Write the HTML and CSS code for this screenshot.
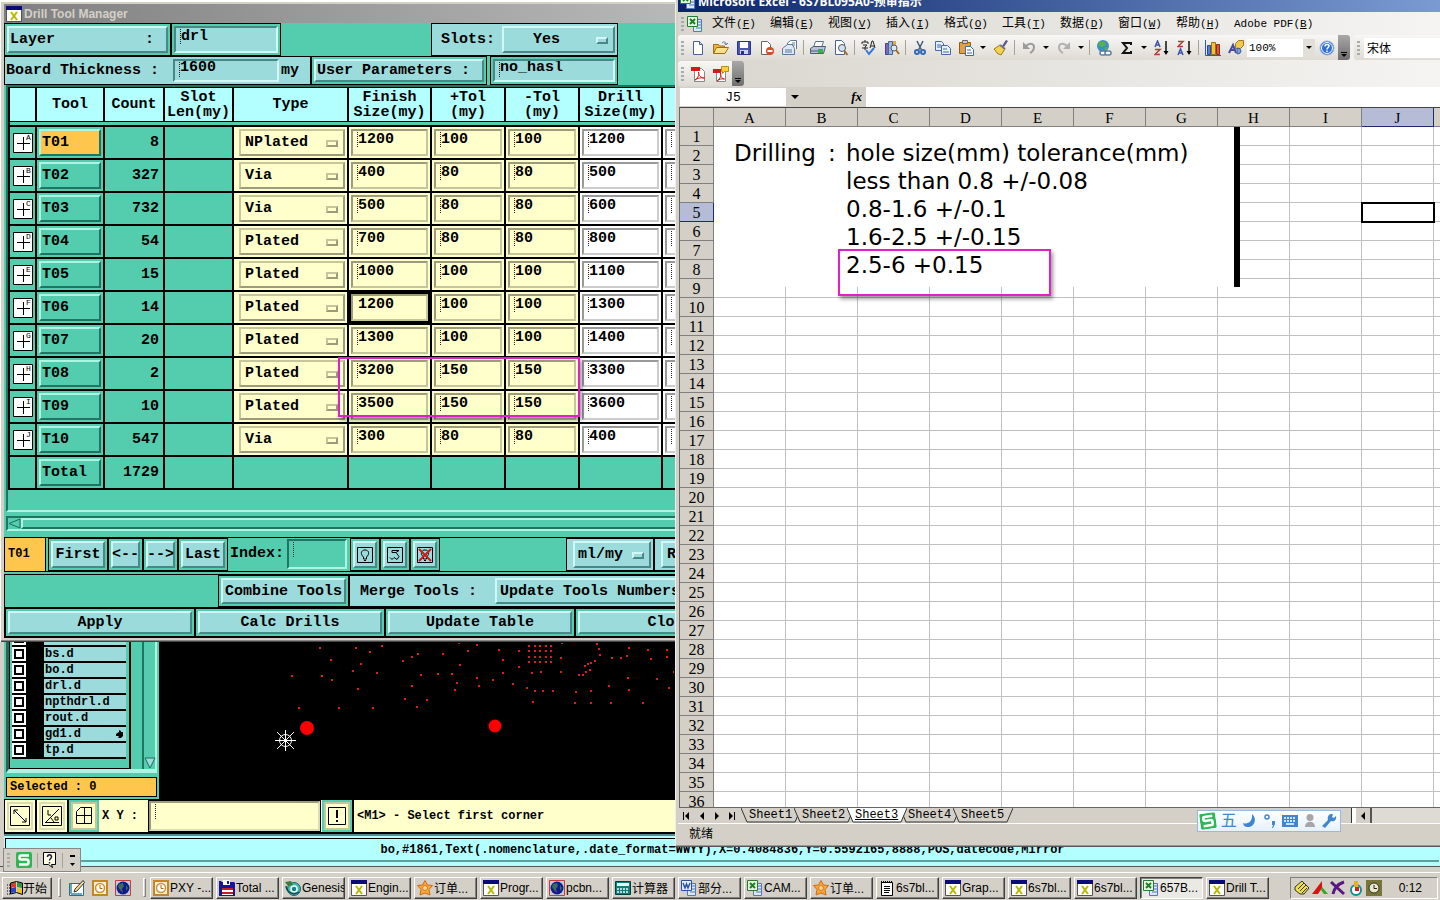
FILE: index.html
```html
<!DOCTYPE html>
<html lang="zh-CN">
<head>
  <meta charset="UTF-8" />
  <title>Drill Tool Manager</title>
  <meta name="viewport" content="width=device-width, initial-scale=1.0" />
  <link rel="stylesheet" href="styles.css">
</head>
<body>
  <svg class="defs" aria-hidden="true">
    <symbol id="i-x" viewBox="0 0 16 16"><path fill="#fff" stroke="#555" d="M.5.5h15v15H.5z"/><path fill="#0a0a78" d="M0 0h16v4H0z"/><path stroke="#b8b800" stroke-width="2" d="M5 6l6 8M11 6l-6 8"/></symbol>
    <symbol id="i-xls" viewBox="0 0 16 16"><path fill="#dce8fa" stroke="#5577bb" d="M6.500 3.500h8v12h-8z"/><path stroke="#5577bb" d="M9 6h5M9 9h5M9 12h5"/><path fill="#e7f5e1" stroke="#287b2e" d="M.5.5h10v10H.5z"/><path stroke="#198024" stroke-width="2" d="M3 3l5 5M8 3L3 8"/></symbol>
    <symbol id="i-doc" viewBox="0 0 16 16"><path fill="#dce8fa" stroke="#5577bb" d="M6.500 3.500h8v12h-8z"/><path stroke="#5577bb" d="M9 6h5M9 9h5M9 12h5"/><path fill="#e8f0ff" stroke="#2852a8" d="M.5.5h10v10H.5z"/><path fill="none" stroke="#2852a8" stroke-width="1.500" d="M2 3l2 5 1.500-4L7 8l2-5"/></symbol>
    <symbol id="i-new" viewBox="0 0 16 16"><path fill="#fff" stroke="#47648f" d="M3.500 1.500h6l3 3v10h-9z"/><path fill="#b9cbe6" stroke="#47648f" d="M9.500 1.500v3h3"/></symbol>
    <symbol id="i-open" viewBox="0 0 16 16"><path fill="#f0b440" stroke="#9c6f16" d="M.5 13.500v-9h5l1 1.500h5v2"/><path fill="#ffe08a" stroke="#9c6f16" d="M.5 13.500l3-6h12l-3.500 6z"/><path fill="none" stroke="#5c789f" d="M9 3c2-2 4-1 4 1m-1.500-1L13 5l2-2"/></symbol>
    <symbol id="i-save" viewBox="0 0 16 16"><path fill="#4b57b8" stroke="#28337e" d="M1.500 1.500h13v13h-13z"/><path fill="#fff" d="M4 2h8v6H4z"/><path fill="#cdd3ee" d="M4 10h8v4H4z"/><path fill="#28337e" d="M5 11h3v3H5z"/></symbol>
    <symbol id="i-perm" viewBox="0 0 16 16"><path fill="#fff" stroke="#666" d="M2.500 1.500h6l3 3v10h-9z"/><circle cx="11" cy="11" r="4" fill="#d84a28"/><path stroke="#fff" stroke-width="2" d="M8.500 11h5"/></symbol>
    <symbol id="i-mail" viewBox="0 0 16 16"><path fill="#fff" stroke="#5c789f" d="M5.500 6V3l3-2.500h6V9"/><path fill="#dfe8f6" stroke="#5c789f" d="M.5 8.500l5-4h5l2 4v6H.5z"/><path stroke="#5c789f" d="M3 10h7M3 12h7M10 3h3M10 5h3"/></symbol>
    <symbol id="i-print" viewBox="0 0 16 16"><path fill="#fff" stroke="#5c6f89" d="M5.500 1.500h8l-2 6h-8z"/><path fill="#b7c4d6" stroke="#4a5b73" d="M.5 8.500l3-2h12l-2 7H.5z"/><path stroke="#4a5b73" d="M1 11h12"/><path fill="#3cae4a" d="M8 9h5v4H8z"/></symbol>
    <symbol id="i-preview" viewBox="0 0 16 16"><path fill="#fff" stroke="#47648f" d="M2.500.5h6l3 3v11h-9z"/><circle cx="9" cy="8" r="3.500" fill="#cfe3f7" stroke="#555"/><path stroke="#a86b2c" stroke-width="2" d="M11.500 11l3 4"/></symbol>
    <symbol id="i-spell" viewBox="0 0 16 16"><path fill="none" stroke="#222" d="M4 0v2M1 4V2h6v2M2 5h4L4 7v3M1 8h6M9 8l2-7h1l2 7M10 6h4"/><path fill="none" stroke="#3878d8" stroke-width="2" d="M5 10l3 4 5-6"/></symbol>
    <symbol id="i-research" viewBox="0 0 16 16"><path fill="#7a68b8" stroke="#4d3f84" d="M1.500 3.500h3v11h-3z"/><path fill="#9fb7e0" stroke="#48659b" d="M4.500 1.500h4v13h-4z"/><path fill="#e6a93c" d="M9 1h3v10H9z"/><circle cx="10" cy="8" r="3" fill="#d7eafa" stroke="#555"/><path stroke="#a86b2c" stroke-width="2" d="M12 10l3 4"/></symbol>
    <symbol id="i-cut" viewBox="0 0 16 16"><path stroke="#44597c" stroke-width="1.500" d="M5 1l4.500 9M11 1L6.500 10"/><g fill="none" stroke="#3668b8" stroke-width="2"><circle cx="5" cy="12" r="2"/><circle cx="11" cy="12" r="2"/></g></symbol>
    <symbol id="i-copy" viewBox="0 0 16 16"><g fill="#e8f0fc" stroke="#4468a8"><path d="M.5 1.500h6l2 2v7h-8z"/><path d="M6.500 5.500h6l3 3v6h-9z"/></g><path stroke="#4468a8" d="M2 5h4M2 7h4M8 9h4M8 12h6"/></symbol>
    <symbol id="i-paste" viewBox="0 0 16 16"><path fill="#e2a13a" stroke="#8d5f18" d="M1.500 2.500h11v11h-11z"/><path fill="#ccc" stroke="#666" d="M4.500.5h5v3h-5z"/><path fill="#fff" stroke="#4468a8" d="M7.500 6.500h5l3 3v6h-8z"/><path stroke="#4468a8" d="M9 10h4M9 13h5"/></symbol>
    <symbol id="i-brush" viewBox="0 0 16 16"><path fill="#5a5486" d="M15 1l-4 6-2-1 4-6z"/><path fill="#f3d24f" stroke="#a07b1d" d="M1 9l6-4 5 4-4 6-2-1-1 0z"/><path stroke="#777" stroke-width="2" d="M7 5l5 4"/></symbol>
    <symbol id="i-undo" viewBox="0 0 16 16"><path fill="none" stroke="#9a9a98" stroke-width="2" d="M5 6c4-4 8-2 8 1 0 3-2 5-4 6"/><path fill="#9a9a98" d="M2 2v7h7z"/></symbol>
    <symbol id="i-redo" viewBox="0 0 16 16"><path fill="none" stroke="#b0b0ae" stroke-width="2" d="M11 6C7 2 3 4 3 7c0 3 2 5 4 6"/><path fill="#b0b0ae" d="M14 2v7H7z"/></symbol>
    <symbol id="i-link" viewBox="0 0 16 16"><circle cx="7" cy="6" r="6" fill="#3c8fc4"/><path fill="#58b048" d="M3 2l5-1 2 4-4 2-3-1zM8 8l4-1-2 4z"/><g fill="#fff" stroke="#5c7cae" stroke-width="1.500"><rect x="4" y="11" width="6" height="4" rx="2"/><rect x="9" y="11" width="6" height="4" rx="2"/></g></symbol>
    <symbol id="i-sum" viewBox="0 0 16 16"><path fill="none" stroke="#111" stroke-width="2" d="M12 5V3H4l4 5-4 5h8v-2"/></symbol>
    <symbol id="i-az" viewBox="0 0 16 16"><path fill="none" stroke="#3e56a8" stroke-width="1.500" d="M1 7l2.500-6L6 7M2 5h3"/><path fill="none" stroke="#a8443e" stroke-width="1.500" d="M1 9.500h5l-5 5h5"/><path stroke="#111" stroke-width="1.500" d="M12 1v12"/><path d="M9.500 11h5L12 15z"/></symbol>
    <symbol id="i-za" viewBox="0 0 16 16"><path fill="none" stroke="#a8443e" stroke-width="1.500" d="M1 1.500h5l-5 5h5"/><path fill="none" stroke="#3e56a8" stroke-width="1.500" d="M1 15l2.500-6L6 15M2 13h3"/><path stroke="#111" stroke-width="1.500" d="M12 1v12"/><path d="M9.500 11h5L12 15z"/></symbol>
    <symbol id="i-chart" viewBox="0 0 16 16"><path fill="none" stroke="#35589a" d="M.5 0v15.500H16"/><path fill="#4e80d8" stroke="#234a92" d="M2.500 5.500h3v9h-3z"/><path fill="#f5bf36" stroke="#9c6f16" d="M6.500 2.500h4v12h-4z"/><path fill="#dc5630" stroke="#8e2c12" d="M11.500 4.500h3v10h-3z"/></symbol>
    <symbol id="i-draw" viewBox="0 0 16 16"><path fill="#f0c850" stroke="#9c7a1e" d="M7.500 3.500l3-3h5v5l-3 3h-5z"/><path fill="#7ba0dc" stroke="#3e5c98" d="M9 14a4 3 0 1 0 0-6z"/><path fill="none" stroke="#4848a0" stroke-width="2" d="M1 13l4-8 3 8M3 10h4"/></symbol>
    <symbol id="i-help" viewBox="0 0 16 16"><circle cx="8" cy="8" r="7" fill="#2f6fd4" stroke="#8fb0e4"/><circle cx="8" cy="8" r="5.500" fill="none" stroke="#fff"/><path fill="none" stroke="#fff" stroke-width="1.500" d="M6 6.500c0-3 4-2.500 4-.5C10 7.500 8 7.500 8 9.500M8 10.500V12"/></symbol>
    <symbol id="i-pdf" viewBox="0 0 16 16"><path fill="#fff" stroke="#888" d="M4.500 2.500h7l3 3v10h-10z"/><path fill="#d81818" d="M1 1h9v4H1z"/><path fill="none" stroke="#d81818" d="M5 14c4-2 4-7 3.500-8 0 4 3 6 6 6-4-.5-7 0-9.500 2"/></symbol>
    <symbol id="i-pdf2" viewBox="0 0 16 16"><path fill="#fff" stroke="#888" d="M3.500 4.500h9v11h-9z"/><path fill="#d81818" d="M0 3h8v4H0z"/><path fill="none" stroke="#d81818" d="M4 15c4-2 4-7 3.500-8 0 4 2 6 4 6-3-.5-5 0-7.500 2"/><path fill="#ffd23c" stroke="#b98d12" d="M8.500.5h7v5h-4l-2 2v-2h-1z"/></symbol>
    <symbol id="i-clock" viewBox="0 0 16 16"><path fill="#fff1d6" stroke="#c98524" stroke-width="2" d="M1 1h14v14H1z"/><circle cx="8" cy="8" r="4.500" fill="#fff" stroke="#d09038" stroke-width="1.500"/><path fill="none" stroke="#a8641a" d="M8 5v3.500h2.500"/></symbol>
    <symbol id="i-globe" viewBox="0 0 16 16"><path fill="#c8c8d8" stroke="#c83c3c" d="M.5.500h15v15H.5z"/><circle cx="8" cy="8" r="6.500" fill="#0c1c8c"/><path fill="#3f6a58" d="M4 4l4-1 1 3-2 3 1 4-3-3-2-3zM11 5l2 3-2 3z"/></symbol>
    <symbol id="i-edit" viewBox="0 0 16 16"><path fill="#fff" stroke="#2a6f8c" d="M.5 3.500h14v12H.5z"/><path stroke="#6aa8c0" stroke-width="2" d="M2 14h11M2 4v10"/><path fill="#f0dc8c" stroke="#333" d="M14 .5l1.500 2L8 11l-3 1 1-3z"/></symbol>
    <symbol id="i-floppy" viewBox="0 0 16 16"><path fill="#16169a" d="M0 1h2l1 1h12l1 1v13H0z"/><path fill="#fff" d="M4 0h7v5H4zM3 8h11v7H3z"/><path fill="#16169a" d="M8 1h2v3H8z"/><path stroke="#c02020" stroke-width="2" d="M3 9h11M3 13h11"/></symbol>
    <symbol id="i-gen" viewBox="0 0 16 16"><circle cx="9" cy="9" r="6.500" fill="#48b8b0" stroke="#14646c"/><circle cx="9" cy="9" r="3" fill="#1c8088" stroke="#e0fff8" stroke-width="1.500"/><path fill="#3a7c34" d="M0 2l6-1 2 4-5 1z"/><path fill="none" stroke="#144848" stroke-width="1.500" d="M1 6c1 8 9 9 13 6"/></symbol>
    <symbol id="i-star" viewBox="0 0 16 16"><path fill="#f7a83c" stroke="#d06a10" d="M8 .5l2.500 4.500 5 .5-3.500 4 1 5.500-5-2-5 2 1-5.500-3.500-4 5-.5z"/><circle cx="8" cy="8" r="2.500" fill="#ffd890" stroke="#e07820"/></symbol>
    <symbol id="i-calc" viewBox="0 0 16 16"><path fill="#167c78" stroke="#063c3c" d="M.5 1.500h15v13H.5z"/><path fill="#dff" d="M2 3h12v3H2z"/><path stroke="#dff" stroke-width="1.500" stroke-dasharray="2 1" d="M2 9h12M2 12h12"/></symbol>
    <symbol id="i-note" viewBox="0 0 16 16"><path fill="#fff" stroke="#000" d="M2.500 2.500h11v13h-11z"/><path stroke="#000" stroke-width="2" stroke-dasharray="1 1" d="M2 2h12"/><path stroke="#000" d="M5 6.500h6M5 8.500h6M5 10.500h6M5 12.500h5"/></symbol>
    <symbol id="i-sogou" viewBox="0 0 16 16"><rect width="16" height="16" rx="2" fill="#2fb551"/><path fill="none" stroke="#fff" stroke-width="2.500" d="M13 3.500H5c-2 0-2 4 0 4h6c2 0 2 5 0 5H3"/></symbol>
    <symbol id="i-mark" viewBox="0 0 20 20"><path fill="#fff" stroke="#000" d="M.5.5h19v19H.5z"/><path stroke="#000" d="M4 10.500h13M10.500 4v13"/></symbol>
  </svg>

  <div class="desktop">
    <!-- editor behind -->
    <section class="editor">
      <div class="editor-main">
        <aside class="side">
          <div class="side-list">
            <div class="layers" id="layers"></div>
            <div class="side-scroll"><svg width="12" height="12" viewBox="0 0 12 12"><path fill="#9bdbdb" stroke="#1f6c5c" d="M1 1h10L6 11z"/></svg></div>
          </div>
          <div class="selected">Selected : 0</div>
        </aside>
        <svg class="board" id="board" width="515" height="156" viewBox="0 0 515 156">
          <g fill="#f00"><circle cx="148" cy="85" r="7"/><circle cx="336" cy="83" r="6.500"/></g>
          <g fill="none" stroke="#fff"><circle cx="126.500" cy="97.500" r="6"/><path d="M116 97.500h21M126.500 87v21M118 89l17 17M135 89l-17 17"/></g>
        </svg>
      </div>
      <div class="prompt">
        <button class="pb" aria-label="Zoom"><svg width="20" height="20" viewBox="0 0 20 20"><path fill="none" stroke="#000" d="M.5.500h19v19H.5zM4 4l12 12M4 8V4h4M16 12v4h-4"/></svg></button>
        <button class="pb" aria-label="Angle"><svg width="20" height="20" viewBox="0 0 20 20"><path fill="none" stroke="#000" d="M.5.500h19v19H.5zM3 17L17 3M3 16.500h14M6 4v5h3M9 12l3 4M13 11h3v3h-3z"/></svg></button>
        <button class="pb teal" aria-label="Grid"><svg width="16" height="18" viewBox="0 0 16 18"><path fill="none" stroke="#000" d="M4.500.5h11v16H.5v-12zM8.500 0v17M0 8.500h16"/></svg></button>
        <label class="xy" for="xy">X Y :</label>
        <input class="xy-input ibeam" id="xy" type="text" />
        <button class="pb teal" aria-label="Alert"><svg width="18" height="18" viewBox="0 0 18 18"><path fill="none" stroke="#000" d="M.5.500h17v17H.5z"/><path stroke="#000" stroke-width="2" d="M9 3v8M9 13v2"/></svg></button>
        <div class="message">&lt;M1&gt; - Select first corner</div>
      </div>
      <div class="coords"><div>bo,#1861,Text(.nomenclature,.date_format=WWYY),X=0.4084836,Y=0.5592165,8888,POS,datecode,Mirror</div></div>
    </section>

    <!-- drill tool manager -->
    <section class="drill">
      <div class="drill-title"><svg class="ic"><use href="#i-x"/></svg>Drill Tool Manager</div>
      <div class="drill-body">
        <div class="line line-1">
          <div class="cell w-layer"><button class="btn layer-btn"><span>Layer</span><span>:</span></button></div>
          <div class="cell w-name"><input class="field blue ibeam" type="text" value="drl" aria-label="Layer" /></div>
          <div class="space"></div>
          <div class="cell flat w-slots"><label for="slots">Slots:</label><span class="pick"><select id="slots" class="btn"><option>Yes</option></select></span></div>
        </div>
        <div class="line line-2">
          <div class="cell flat w-board"><label for="thick">Board Thickness :</label><input class="field blue ibeam" id="thick" type="text" value="1600" /><span>my</span></div>
          <div class="cell w-user"><button class="btn">User Parameters :</button></div>
          <div class="cell w-hasl"><input class="field blue ibeam" type="text" value="no_hasl" aria-label="User Parameters" /></div>
        </div>

        <div class="table-panel">
          <table class="tools">
            <colgroup><col class="c1"><col class="c2"><col class="c3"><col class="c4"><col class="c5"><col class="c6"><col class="c7"><col class="c7"><col class="c6"><col></colgroup>
            <thead>
              <tr><th></th><th>Tool</th><th>Count</th><th>Slot<br>Len(my)</th><th>Type</th><th>Finish<br>Size(my)</th><th>+Tol<br>(my)</th><th>-Tol<br>(my)</th><th>Drill<br>Size(my)</th><th></th></tr>
              <tr class="gap"><td colspan="10"></td></tr>
            </thead>
            <tbody id="tools"></tbody>
          </table>
        </div>
        <div class="hscroll"><svg width="13" height="11" viewBox="0 0 13 11"><path fill="#54cdae" stroke="#1f6c5c" d="M12 1v9L1 5.500z"/></svg><div class="thumb"></div></div>

        <div class="line line-3">
          <div class="current">T01</div>
          <div class="cell w-first"><button class="btn">First</button></div>
          <div class="cell w-arrow"><button class="btn">&lt;--</button></div>
          <div class="cell w-arrow"><button class="btn">--&gt;</button></div>
          <div class="cell w-last"><button class="btn">Last</button></div>
          <label class="index" for="index">Index:</label>
          <input class="field index-input ibeam" id="index" type="text" />
          <div class="cell w-icon"><button class="btn" aria-label="Highlight"><svg width="18" height="18" viewBox="0 0 18 18"><path fill="none" stroke="#000" d="M1.500 1.500h15v15h-15zM7.500 11C4 8 5 4 9 4s5 4 1.500 7v2h-3zM8 14.500h2"/></svg></button></div>
          <div class="cell w-icon"><button class="btn" aria-label="Clear"><svg width="18" height="18" viewBox="0 0 18 18"><path fill="none" stroke="#000" d="M1.500 1.500h15v15h-15zM6 4.500h7M6 4.500v2h4l3 4-2 3-3-2-2 2-2-2M10 6.500l3-2"/></svg></button></div>
          <div class="cell w-icon"><button class="btn" aria-label="Off"><svg width="18" height="18" viewBox="0 0 18 18"><path fill="none" stroke="#000" d="M1.500 1.500h15v15h-15zM7.500 11C4 8 5 4 9 4s5 4 1.500 7v2h-3zM8 14.500h2"/><path stroke="#d01818" stroke-width="2" d="M3 3l12 12M15 3L3 15"/></svg></button></div>
          <div class="space-2"></div>
          <div class="cell flat w-unit"><span class="pick"><select class="btn" aria-label="Units"><option>ml/my</option></select></span></div>
          <div class="cell flat w-rest"><button class="btn">R</button></div>
        </div>
        <div class="line line-4">
          <div class="space-3"></div>
          <div class="cell w-combine"><button class="btn">Combine Tools</button></div>
          <div class="cell flat w-merge"><span>Merge Tools :</span><button class="btn">Update Tools Numbers</button></div>
        </div>
        <div class="line line-5">
          <div class="cell"><button class="btn">Apply</button></div>
          <div class="cell"><button class="btn">Calc Drills</button></div>
          <div class="cell"><button class="btn">Update Table</button></div>
          <div class="cell"><button class="btn">Close</button></div>
        </div>
      </div>
      <div class="note note-tools"></div>
    </section>

    <!-- spreadsheet -->
    <section class="excel">
      <div class="excel-title"><svg class="ic"><use href="#i-xls"/></svg>Microsoft Excel - 6S7BL095A0-预审指示</div>
      <nav class="menu">
        <i class="grip"></i><svg class="ic"><use href="#i-xls"/></svg>
        <a href="#">文件<span>(<u>F</u>)</span></a><a href="#">编辑<span>(<u>E</u>)</span></a><a href="#">视图<span>(<u>V</u>)</span></a><a href="#">插入<span>(<u>I</u>)</span></a><a href="#">格式<span>(<u>O</u>)</span></a><a href="#">工具<span>(<u>T</u>)</span></a><a href="#">数据<span>(<u>D</u>)</span></a><a href="#">窗口<span>(<u>W</u>)</span></a><a href="#">帮助<span>(<u>H</u>)</span></a><a href="#"><span>Adobe PDF(<u>B</u>)</span></a>
      </nav>
      <div class="bars">
        <div class="toolbar" id="toolbar"></div>
        <div class="toolbar grow"><i class="grip"></i><input class="font-box" type="text" value="宋体" aria-label="字体" /></div>
      </div>
      <div class="bars">
        <div class="toolbar"><i class="grip"></i><button class="tb" aria-label="pdf"><svg class="ic"><use href="#i-pdf"/></svg></button><button class="tb" aria-label="pdf comment"><svg class="ic"><use href="#i-pdf2"/></svg></button><span class="more"></span></div>
      </div>
      <div class="formula">
        <input class="name-box" type="text" value="J5" aria-label="名称框" />
        <span class="arrow"></span><em>fx</em>
        <input class="formula-box" type="text" aria-label="编辑栏" />
      </div>
      <div class="grid">
        <table class="sheet">
          <thead><tr id="cols"></tr></thead>
          <tbody id="rows"></tbody>
        </table>
        <div class="spec">
          <div class="spec-name">Drilling</div>
          <div class="spec-colon">:</div>
          <div>hole size(mm) tolerance(mm)<br>less than 0.8 +/-0.08<br>0.8-1.6 +/-0.1<br>1.6-2.5 +/-0.15<br>2.5-6 +0.15</div>
        </div>
        <div class="note note-spec"></div>
      </div>
      <div class="tabs">
        <svg width="60" height="16" viewBox="0 0 60 16"><path stroke="#000" d="M4.500 4v8M55.500 4v8"/><path d="M10 4v8L6 8zM25 4v8l-4-4zM36 4v8l4-4zM50 4v8l4-4z"/></svg>
        <div class="tab-list" id="tabs"></div>
        <div class="tab-scroll"><button aria-label="scroll left"></button></div>
      </div>
      <div class="status">就绪</div>
    </section>

    <div class="ime">
      <svg class="ic tilt"><use href="#i-sogou"/></svg>
      <span>五</span>
      <svg width="16" height="16" viewBox="0 0 16 16"><path fill="#3f86d0" d="M10 1c6 5 2 14-5 13-2 0-4-2-4-4 5 2 10-2 9-9z"/></svg>
      <svg width="14" height="16" viewBox="0 0 14 16"><circle cx="4" cy="4" r="2" fill="none" stroke="#3f86d0" stroke-width="1.500"/><path fill="#3f86d0" d="M9 8h3v3l-2 4H9l1-3H9z"/></svg>
      <svg width="18" height="16" viewBox="0 0 18 16"><rect x="1" y="2" width="16" height="12" fill="#3f86d0"/><path stroke="#fff" stroke-width="1.500" stroke-dasharray="2 1" d="M3 5h12M3 8h12"/><path stroke="#fff" stroke-width="1.500" d="M5 11h8"/></svg>
      <svg width="12" height="16" viewBox="0 0 12 16"><circle cx="6" cy="4.500" r="3.500" fill="#a6a6a6"/><path fill="#a6a6a6" d="M1 14c0-7 10-7 10 0z"/></svg>
      <svg width="16" height="16" viewBox="0 0 16 16"><path fill="#3f86d0" d="M10 1h2l-1 3 2 1 2-2c1 4-2 6-5 5l-6 7-3-2 6-6c-1-3 1-6 3-6z"/></svg>
    </div>

    <div class="langbar">
      <i class="grip"></i>
      <svg class="ic"><use href="#i-sogou"/></svg>
      <i class="sep"></i>
      <svg width="14" height="16" viewBox="0 0 14 16"><path fill="#ffffe0" stroke="#000" d="M.5.500h12v12h-4l1 3-4-3h-5z"/><path fill="none" stroke="#1c1c50" stroke-width="1.500" d="M4.500 5c0-3 4-3 4 0 0 1.500-2 1.500-2 3.500M6.500 10v1.500"/></svg>
      <i class="sep"></i>
      <svg width="8" height="14" viewBox="0 0 8 14"><path d="M2 2h5v2H2zM2 10h5l-2.500 3z"/></svg>
    </div>

    <footer class="taskbar">
      <button class="start"><svg class="ic" viewBox="0 0 16 16"><path stroke="#000" stroke-dasharray="1 1" d="M0 5h5M0 8h5M0 11h5M0 14h4"/><path fill="#e23a22" d="M4 3l5-1v5H4z"/><path fill="#2a9c3a" d="M10 2l5 1v5l-5-1z"/><path fill="#2148c8" d="M4 8l5-1v5l-5 1z"/><path fill="#f0c020" d="M10 8l5 1v5l-5-1z"/><path fill="none" stroke="#000" d="M3.500 3v11l6-1.500 6 2V3l-6-1.500z"/></svg>开始</button>
      <i class="split"></i>
      <div class="quick"><svg class="ic"><use href="#i-edit"/></svg><svg class="ic"><use href="#i-clock"/></svg><svg class="ic"><use href="#i-globe"/></svg></div>
      <i class="split"></i>
      <div class="tasks" id="tasks"></div>
      <div class="tray">
        <svg class="ic" viewBox="0 0 16 16"><path fill="#f0e040" stroke="#333" d="M1 7l7-6 7 7-5 6H6l-5-4z"/><path stroke="#333" d="M4 9l6-6M6 11l6-6M8 13l5-5"/></svg>
        <svg class="ic" viewBox="0 0 16 16"><path fill="#e01010" d="M0 14L10 1v7l-4 6z"/><path fill="#20b020" d="M10 7l6 7h-4l-3-4z"/></svg>
        <svg class="ic" viewBox="0 0 16 16"><path fill="none" stroke="#581880" stroke-width="3" d="M1 2l13 12M14 2C8 4 4 9 3 14"/></svg>
        <svg class="ic" viewBox="0 0 16 16"><circle cx="8" cy="10" r="5" fill="#fff" stroke="#1c8c90" stroke-width="2"/><path fill="#e8b020" d="M6 1h4v6H6z"/><path fill="#d02020" d="M7 7h4v4H7z"/></svg>
        <svg class="ic" viewBox="0 0 16 16"><path fill="#76763a" d="M0 0h16v16H0z"/><circle cx="8" cy="8" r="5" fill="#e8e8d0" stroke="#33331c"/><path fill="none" stroke="#222" d="M8 5v3.500h3"/></svg>
        <time>0:12</time>
      </div>
    </footer>
  </div>

  <script>
    const ic = id => `<svg class="ic"><use href="#i-${id}"/></svg>`;

    // name, count, type, finish, +tol, -tol, drill
    const tools = [
      ["T01", 8, "NPlated", 1200, 100, 100, 1200],
      ["T02", 327, "Via", 400, 80, 80, 500],
      ["T03", 732, "Via", 500, 80, 80, 600],
      ["T04", 54, "Plated", 700, 80, 80, 800],
      ["T05", 15, "Plated", 1000, 100, 100, 1100],
      ["T06", 14, "Plated", 1200, 100, 100, 1300],
      ["T07", 20, "Plated", 1300, 100, 100, 1400],
      ["T08", 2, "Plated", 3200, 150, 150, 3300],
      ["T09", 10, "Plated", 3500, 150, 150, 3600],
      ["T10", 547, "Via", 300, 80, 80, 400]
    ];

    function field(value, cls, label) {
      return `<td class="${cls}"><input class="field ibeam" type="text" value="${value}" aria-label="${label}" /></td>`;
    }

    document.getElementById("tools").innerHTML = tools.map(([name, count, type, size, plus, minus, drill], i) => `
      <tr>
        <td class="mark"><svg width="20" height="20" viewBox="0 0 20 20"><use href="#i-mark"/><text x="13" y="7">${"ABCDEFGHIJ"[i]}</text></svg></td>
        <td><button class="btn tool ${i === 0 ? "on" : ""}">${name}</button></td>
        <td class="num">${count}</td>
        <td></td>
        <td class="yellow"><span class="pick"><select class="btn" aria-label="${name} type"><option>${type}</option></select></span></td>
        ${field(size, i === 5 ? "yellow focus" : "yellow", name + " finish size")}
        ${field(plus, "yellow", name + " plus")}
        ${field(minus, "yellow", name + " minus")}
        ${field(drill, "white", name + " drill size")}
        ${field("", "white", name + " extra")}
      </tr>`).join("") +
      `<tr><td></td><td><button class="btn tool">Total</button></td><td class="num">1729</td>${"<td></td>".repeat(7)}</tr>`;

    document.getElementById("layers").innerHTML = ["", "bs.d", "bo.d", "drl.d", "npthdrl.d", "rout.d", "gd1.d", "tp.d"].map(name => `
      <label class="layer"><input type="checkbox" /><span>${name}${name === "gd1.d" ? '<svg width="9" height="9" viewBox="0 0 9 9"><path d="M1 4l3-2V0l2 1v1h2v4L6 8H3l1-2H1z"/></svg>' : ""}</span></label>`).join("");

    // drill hits on the board
    const hits = [
      [196,5],[222,3],[210,9],[258,11],[252,14],[243,18],[201,21],[193,28],[217,30],[198,46],[213,65],[261,32],[278,31],
      [292,31],[283,11],[300,22],[308,8],[317,2],[317,35],[319,43],[297,40],[295,47],[252,43],[245,56],[267,57],[257,64],
      [333,37],[339,7],[343,17],[343,30],[359,8],[359,24],[353,41],[367,45],[372,30],[381,29],[375,48],[383,48],[393,48],
      [373,59],[401,15],[401,29],[419,32],[423,32],[426,29],[430,27],[425,23],[428,21],[431,20],[435,18],[440,12],[439,6],
      [437,1],[452,15],[461,15],[467,13],[469,5],[488,7],[491,16],[507,7],[507,14],[468,35],[469,47],[449,43],[497,36],
      [509,45],[514,29],[416,49],[431,48],[415,60],[431,60],[451,60],[483,60],[299,0],[402,0],
      [160,5],[171,17],[162,33],[132,33],[172,37],[139,65],[179,65]
    ];
    [369, 375, 380, 386, 391].forEach(x => [3, 8, 14, 19].forEach(y => hits.push([x, y])));
    document.getElementById("board").innerHTML +=
      `<path fill="#e01c1c" d="${hits.map(([x, y]) => `M${x} ${y - 1}h2v2h-2z`).join("")}"/>`;

    const bar = ["new", "open", "save", "perm", "mail", "|", "print", "preview", "|", "spell", "research", "|",
      "cut", "copy", "paste", "v", "brush", "|", "undo", "v", "redo", "v", "|", "link", "sum", "v", "az", "za", "|", "chart", "draw"];
    document.getElementById("toolbar").innerHTML = '<i class="grip"></i>' + bar.map(b =>
      b === "|" ? '<i class="sep"></i>' : b === "v" ? '<span class="arrow"></span>' : `<button class="tb" aria-label="${b}">${ic(b)}</button>`
    ).join("") + '<span class="zoom"><select aria-label="zoom"><option>100%</option></select><span class="arrow"></span></span>' +
      `<button class="tb" aria-label="help">${ic("help")}</button><span class="more"></span>`;

    const cols = "ABCDEFGHIJK".split("");
    document.getElementById("cols").innerHTML = "<th></th>" +
      cols.map(c => `<th class="${c === "J" ? "on" : ""}">${c === "K" ? "" : c}</th>`).join("");
    let rows = "";
    for (let r = 1; r <= 36; r++) {
      rows += `<tr><th class="${r === 5 ? "on" : ""}">${r}</th>` +
        cols.map(c => `<td class="${r === 5 && c === "J" ? "cursor" : ""}"></td>`).join("") + "</tr>";
    }
    document.getElementById("rows").innerHTML = rows;

    document.getElementById("tabs").innerHTML = [1, 2, 3, 4, 5].map(n =>
      `<a href="#" class="tab ${n === 3 ? "on" : ""}"><svg width="60" height="15" viewBox="0 0 60 15"><path d="M0 0l6 14h48l6-14"/></svg><span>Sheet${n}</span></a>`).join("");

    const tasks = [["clock", "PXY -..."], ["floppy", "Total ..."], ["gen", "Genesis"], ["x", "Engin..."], ["star", "订单..."],
      ["x", "Progr..."], ["globe", "pcbn..."], ["calc", "计算器"], ["doc", "部分..."], ["xls", "CAM..."], ["star", "订单..."],
      ["note", "6s7bl..."], ["x", "Grap..."], ["x", "6s7bl..."], ["x", "6s7bl..."], ["xls", "657B..."], ["x", "Drill T..."]];
    document.getElementById("tasks").innerHTML = tasks.map(([icon, text], i) =>
      `<button class="task ${i === 15 ? "on" : ""}">${ic(icon)}<span>${text}</span></button>`).join("");
  </script>
</body>
</html>
```

FILE: styles.css
```css
:root {
  --teal: #54cdae;
  --teal-dark: #1f7562;
  --teal-light: #b0f3e2;
  --blue: #9bdbdb;
  --blue-dark: #4a8888;
  --blue-light: #d2f7f7;
  --cyan: #b3ffff;
  --yellow: #ffffcc;
  --orange: #ffc64d;
  --gray: #d4d0c8;
  --mono: "Liberation Mono", "Noto Sans CJK SC", monospace;
  --ui: "Liberation Sans", "Noto Sans CJK SC", sans-serif;
}

*, *::before, *::after {
  box-sizing: border-box;
}

body {
  margin: 0;
  font-family: var(--ui);
  font-size: 12px;
  color: #000;
}

button, input, select {
  font: inherit;
  color: inherit;
  margin: 0;
  padding: 0;
  border: 0;
  border-radius: 0;
  background: none;
  appearance: none;
  min-width: 0;
}

a {
  color: inherit;
  text-decoration: none;
}

svg {
  flex: none;
  display: block;
}

.defs {
  display: none;
}

.ic {
  width: 16px;
  height: 16px;
}

.desktop {
  position: relative;
  height: 100vh;
  overflow: hidden;
  background: var(--gray);
}

/* editor behind */
.editor {
  position: absolute;
  top: 0;
  left: 0;
  right: 0;
  bottom: 33px;
  display: flex;
  flex-direction: column;
  padding-left: 4px;
  background: var(--gray);
  border-bottom: 1px solid #555;
  font-family: var(--mono);
  font-weight: bold;
}

.editor-main {
  flex: 1;
  min-height: 0;
  display: flex;
  align-items: flex-end;
  background: #000;
}

.side {
  width: 155px;
  padding: 0 2px 2px;
  background: var(--teal);
}

.side-list {
  display: flex;
  justify-content: space-between;
  border-left: 3px solid #2b6355;
  border-bottom: 4px solid var(--teal-light);
  margin-bottom: 4px;
}

.layers {
  width: 122px;
  border: 1px solid #000;
  padding: 0 3px 9px 2px;
  border-right-width: 2px;
}

.layer {
  display: flex;
  height: 16px;
  background: #000;
}

.layer input {
  width: 14px;
  height: 14px;
  background: #fff;
  border: 2px solid #fff;
  box-shadow: inset 0 0 0 2px #000;
  margin-right: 18px;
}

.layer span {
  flex: 1;
  display: flex;
  align-items: center;
  justify-content: space-between;
  height: 14px;
  padding: 0 2px 0 1px;
  background: var(--blue);
  line-height: 14px;
}

.side-scroll {
  width: 15px;
  display: flex;
  align-items: flex-end;
  border-left: 2px solid var(--teal-dark);
  border-right: 2px solid var(--teal-light);
}

.selected {
  height: 20px;
  line-height: 18px;
  padding-left: 3px;
  background: var(--orange);
  border: 1px solid #000;
}

.prompt {
  display: flex;
  height: 35px;
  border: 1px solid #000;
  border-bottom-width: 2px;
  background: var(--yellow);
}

.pb {
  width: 32px;
  display: grid;
  place-items: center;
  border-right: 2px solid #000;
  background: var(--yellow);
  box-shadow: inset 0 0 0 2px var(--yellow), inset 0 0 0 4px #dcdcb4;
}

.pb.teal {
  width: 30px;
  border: 2px solid var(--teal);
  box-shadow: inset 0 0 0 2px #c6c69c;
}

.xy {
  width: 48px;
  padding-left: 3px;
  line-height: 32px;
  white-space: pre;
}

.xy-input {
  width: 171px;
  border: 2px solid;
  border-color: #9c9c7c #dcdcb4 #dcdcb4 #9c9c7c;
  margin: 1px 2px;
  outline: 1px solid #000;
}

.message {
  flex: 1;
  padding-left: 3px;
  border-left: 2px solid #000;
  line-height: 32px;
}

.coords {
  height: 32px;
  padding: 2px 1px;
  background: var(--cyan);
  border-top: 2px solid #5b8d88;
}

.coords div {
  height: 24px;
  line-height: 22px;
  text-align: center;
  border: 1px solid #000;
  border-width: 1px 0 2px 1px;
  border-bottom-color: #5fa09c;
}

/* drill tool manager */
.drill {
  position: absolute;
  top: 0;
  left: 0;
  width: 780px;
  padding: 4px;
  background: var(--gray);
  box-shadow: inset 1px 2px #fff, inset 0 -1px #444, inset 0 -2px #888;
  font-family: var(--mono);
  font-weight: bold;
  font-size: 15px;
}

.drill-title {
  display: flex;
  align-items: center;
  gap: 2px;
  height: 19px;
  padding-left: 2px;
  font: bold 12px var(--ui);
  color: var(--gray);
  background: linear-gradient(90deg, #808080, #c0c0c0);
}

.drill-body {
  background: var(--teal);
  overflow: hidden;
}

.line {
  display: flex;
  white-space: nowrap;
}

.line-1 { height: 33px; }
.line-2 { height: 29px; }

.line-3 {
  height: 35px;
  margin-top: 6px;
  border: 1px solid #000;
}

.line-4 {
  height: 33px;
  margin-top: 2px;
  border: 1px solid #000;
  border-bottom: 0;
}

.line-5 {
  height: 31px;
  border: 1px solid #000;
}

.cell {
  flex: none;
  display: flex;
  align-items: center;
  padding: 2px;
  border: 1px solid #000;
}

.cell.flat {
  background: var(--blue);
}

.btn {
  flex: 1;
  width: 100%;
  height: 100%;
  display: flex;
  align-items: center;
  justify-content: center;
  background: var(--blue);
  border: 2px solid;
  border-color: var(--blue-light) var(--blue-dark) var(--blue-dark) var(--blue-light);
  white-space: pre;
}

.field {
  width: 100%;
  height: 100%;
  padding: 0 0 6px 5px;
  border: 2px solid;
  border-color: var(--teal-dark) var(--teal-light) var(--teal-light) var(--teal-dark);
}

.field.blue {
  background-color: var(--blue);
  border-color: var(--blue-dark) var(--blue-light) var(--blue-light) var(--blue-dark);
}

/* dotted text caret at the start of each field */
.ibeam {
  background-image: repeating-linear-gradient(#222 0 1px, transparent 1px 2px);
  background-repeat: no-repeat;
  background-size: 1px 15px;
  background-position: 4px 1px;
}

.pick {
  position: relative;
  flex: 1;
  display: block;
  width: 100%;
  height: 100%;
}

.pick::after {
  content: "";
  position: absolute;
  right: 7px;
  top: 50%;
  width: 12px;
  height: 7px;
  margin-top: -3px;
  border: 2px solid;
  border-color: var(--blue-light) var(--blue-dark) var(--blue-dark) var(--blue-light);
}

.w-layer { width: 167px; }
.w-name { width: 110px; }
.space { width: 150px; }
.w-slots { width: 187px; padding-left: 9px; gap: 7px; }
.w-board { width: 307px; padding-left: 1px; }
.w-board input { width: 106px; margin: 0 2px 0 14px; }
.w-user { width: 176px; margin-right: 3px; }
.w-user .btn { justify-content: flex-start; padding-left: 1px; }
.w-hasl { width: 128px; }
.w-slots select { padding-left: 29px; }

.layer-btn {
  justify-content: space-between;
  padding: 0 12px 0 1px;
}

.table-panel {
  margin-left: 2px;
  padding-bottom: 20px;
  border: 2px solid var(--teal-dark);
  border-bottom-color: var(--teal-light);
}

.tools {
  table-layout: fixed;
  width: 100%;
  border-spacing: 0;
  border-left: 2px solid #000;
  line-height: 15px;
}

.c1 { width: 27px; }
.c2 { width: 68px; }
.c3 { width: 60px; }
.c4 { width: 69px; }
.c5 { width: 115px; }
.c6 { width: 83px; }
.c7 { width: 74px; }

.tools th {
  height: 35px;
  padding: 0;
  background: var(--cyan);
  border: solid #000;
  border-width: 1px 2px 1px 0;
  white-space: nowrap;
}

.tools td {
  height: 33px;
  padding: 2px;
  border: solid #000;
  border-width: 0 2px 2px 0;
}

.tools .gap td {
  height: 5px;
  padding: 0;
}

.tools td > * {
  height: 27px;
}

.tools .btn {
  background: var(--teal);
  border-color: var(--teal-light) var(--teal-dark) var(--teal-dark) var(--teal-light);
}

.tools .tool {
  width: 62px;
  justify-content: flex-start;
  padding-left: 1px;
}

.tools .tool.on {
  background: var(--orange);
}

.tools .num {
  padding-right: 4px;
  text-align: right;
}

.tools .mark svg {
  height: 20px;
  margin: auto;
}

.mark text {
  font: 8px var(--mono);
}

.tools .yellow {
  background: var(--yellow);
}

.tools .white {
  background: #fff;
}

.tools .yellow .field {
  border-color: #9c9c7c #c6c69c #c6c69c #9c9c7c;
}

.tools .white .field {
  border-color: #999 #ccc #ccc #999;
}

.tools .focus .field {
  background-image: none;
  outline: 3px solid #000;
}

.tools .pick {
  width: 106px;
  margin-left: auto;
}

.tools .pick .btn {
  background: var(--yellow);
  padding-left: 4px;
  border-color: #c6c69c #9c9c7c #9c9c7c #c6c69c;
}

.tools .pick::after {
  border-color: #c6c69c #9c9c7c #9c9c7c #c6c69c;
}

.hscroll {
  display: flex;
  align-items: center;
  height: 15px;
  margin: 4px 0 0 2px;
  border: 2px solid var(--teal-dark);
  border-bottom-color: var(--teal-light);
}

.thumb {
  flex: 1;
  height: 11px;
  border: 2px solid;
  border-color: var(--teal-light) var(--teal-dark) var(--teal-dark) var(--teal-light);
}

.current {
  width: 41px;
  margin-right: 2px;
  padding-left: 3px;
  background: var(--orange);
  border-right: 1px solid #000;
  font-size: 12px;
  line-height: 32px;
}

.w-first { width: 60px; }
.w-arrow { width: 35px; }
.w-last { width: 50px; }
.w-icon { width: 30px; }
.w-unit { width: 88px; padding-left: 6px; }
.w-unit select { padding-left: 3px; }
.w-rest { width: 120px; padding-left: 6px; }
.w-rest .btn { justify-content: flex-start; padding-left: 4px; }
.w-combine { width: 131px; }
.w-merge { width: 423px; padding-left: 10px; }
.w-merge .btn { margin-left: 18px; justify-content: flex-start; padding-left: 3px; }
.space-2 { width: 126px; }
.space-3 { width: 213px; }

.index {
  padding: 0 3px 0 2px;
  line-height: 32px;
}

.index-input {
  width: 60px;
  margin: 1px 3px 1px 0;
  height: 30px;
}

.line-5 .cell {
  width: 190px;
}

.note {
  position: absolute;
  border: 2px solid #e020c8;
  box-shadow: 2px 3px 4px rgba(0, 0, 0, 0.4);
}

.note-tools {
  left: 338px;
  top: 357px;
  width: 242px;
  height: 60px;
}

/* spreadsheet */
.excel {
  position: absolute;
  top: -10px;
  left: 675px;
  right: 0;
  bottom: 53px;
  display: flex;
  flex-direction: column;
  padding-left: 3px;
  background: var(--gray);
  border-bottom: 1px solid #555;
  box-shadow: inset 1px 0 #eee, inset 0 -1px #999;
}

.excel-title {
  display: flex;
  align-items: center;
  gap: 2px;
  height: 22px;
  padding-left: 2px;
  color: #fff;
  font: bold 12px "Open Sans", "Noto Sans CJK SC", sans-serif;
  background: linear-gradient(90deg, #0a246a, #7a9bd2);
}

.grip {
  flex: none;
  width: 3px;
  height: 14px;
  margin: 0 3px;
  background: repeating-linear-gradient(#aaa 0 2px, transparent 2px 4px);
}

.menu, .bars {
  background: linear-gradient(90deg, #d8d5ce, #f5f4f2);
}

.menu {
  display: flex;
  align-items: center;
  height: 23px;
  line-height: 22px;
}

.menu svg {
  margin-right: 9px;
}

.menu a {
  width: 58px;
  white-space: nowrap;
}

.menu span {
  font-family: var(--mono);
  font-size: 11px;
}

.bars {
  display: flex;
  gap: 4px;
  height: 26px;
  padding-bottom: 1px;
}

.toolbar {
  display: flex;
  align-items: center;
  border-radius: 3px;
  background: linear-gradient(#f8f7f5, #dedbd4);
}

.toolbar.grow {
  flex: 1;
}

.toolbar .grip {
  margin: 0 2px 0 3px;
}

.tb {
  width: 23px;
  height: 22px;
  display: grid;
  place-items: center;
}

.sep {
  width: 1px;
  height: 15px;
  margin: 0 2px;
  background: #a6a296;
}

.arrow {
  width: 12px;
  display: grid;
  place-items: center;
}

.arrow::after {
  content: "";
  border: solid transparent;
  border-width: 3px 3px 0;
  border-top-color: #000;
}

.zoom {
  width: 68px;
  height: 18px;
  display: flex;
  background: #fff;
  font: 11px var(--mono);
}

.zoom select {
  flex: 1;
  padding-left: 2px;
}

.zoom .arrow {
  background: #e2dfd8;
}

.more {
  align-self: stretch;
  width: 12px;
  display: flex;
  flex-direction: column;
  align-items: center;
  justify-content: flex-end;
  gap: 1px;
  padding-bottom: 3px;
  border-radius: 0 3px 3px 0;
  background: linear-gradient(#a8a8a8, #6e6e6e);
}

.more::before {
  content: "";
  width: 6px;
  height: 1px;
  background: #000;
}

.more::after {
  content: "";
  border: solid transparent;
  border-width: 3px 3px 0;
  border-top-color: #000;
}

.font-box {
  flex: 1;
  height: 20px;
  margin-left: 2px;
  padding-left: 3px;
  background: #fff;
}

.formula {
  display: flex;
  align-items: center;
  height: 20px;
  padding-left: 2px;
  background: var(--gray);
}

.name-box {
  width: 106px;
  height: 18px;
  text-align: center;
  background: #fff;
  font: 13px var(--mono);
}

.formula .arrow {
  width: 18px;
}

.formula .arrow::after {
  border-width: 4px 4px 0;
}

.formula em {
  flex: none;
  width: 62px;
  padding-right: 4px;
  text-align: right;
  font: italic bold 13px "Liberation Serif", serif;
}

.formula-box {
  flex: 1;
  height: 20px;
  background: #fff;
}

.grid {
  position: relative;
  flex: 1;
  min-height: 0;
  overflow: hidden;
  background: #fff;
  border-top: 1px solid #444;
  border-left: 1px solid #666;
  margin-left: 1px;
}

.sheet {
  table-layout: fixed;
  width: 826px;
  border-spacing: 0;
}

.sheet th, .sheet td {
  height: 19px;
  padding: 0;
  border: solid #c0c0c0;
  border-width: 0 1px 1px 0;
}

.sheet th {
  width: 72px;
  padding-top: 2px;
  background: var(--gray);
  border-color: #808080;
  font: 15px/16px "Liberation Serif", serif;
}

.sheet th:first-child {
  width: 34px;
}

.sheet tbody th {
  font-size: 16px;
}

.sheet th.on {
  background: #b6bcd6;
  border-color: #1c2c6c;
}

.sheet .cursor {
  outline: 2px solid #000;
  outline-offset: -1px;
}

/* scanned drilling spec pasted over the cells */
.spec {
  position: absolute;
  left: 34px;
  top: 19px;
  width: 526px;
  height: 160px;
  display: flex;
  padding: 12px 0 0 20px;
  background: #fff;
  border-right: 6px solid #000;
  font: 23px/28px "DejaVu Sans", sans-serif;
  white-space: nowrap;
}

.spec-name {
  width: 94px;
}

.spec-colon {
  width: 18px;
}

.note-spec {
  left: 158px;
  top: 141px;
  width: 213px;
  height: 47px;
}

.tabs {
  display: flex;
  height: 16px;
  margin-left: 1px;
  border-top: 1px solid #666;
  overflow: hidden;
}

.tab-list {
  flex: 1;
  display: flex;
  padding-left: 2px;
}

.tab {
  position: relative;
  width: 53px;
  font: 12px/15px var(--mono);
}

.tab svg {
  position: absolute;
  left: 0;
  top: 0;
  fill: var(--gray);
  stroke: #333;
}

.tab span {
  position: relative;
  padding-left: 8px;
}

.tab.on {
  z-index: 1;
  text-decoration: underline;
}

.tab.on svg {
  fill: #fff;
}

.tab-scroll {
  width: 88px;
  background: #dedbd4;
  border-left: 4px solid #fff;
  outline: 1px solid #333;
}

.tab-scroll button {
  width: 16px;
  height: 15px;
  display: grid;
  place-items: center;
  background: var(--gray);
  border-right: 2px solid #555;
}

.tab-scroll button::after {
  content: "";
  border: solid transparent;
  border-width: 4px 4px 4px 0;
  border-right-color: #000;
}

.status {
  height: 23px;
  padding-left: 11px;
  line-height: 20px;
  border-top: 1px solid #fff;
}

.ime {
  position: absolute;
  right: 99px;
  bottom: 68px;
  width: 144px;
  height: 22px;
  display: flex;
  align-items: center;
  justify-content: space-between;
  padding: 0 3px 0 2px;
  background: linear-gradient(#fff, #e6f1fc);
  border: 1px solid #9cb8dc;
}

.ime span {
  font-size: 16px;
  line-height: 20px;
  color: #3f86d0;
}

.tilt {
  transform: rotate(-8deg);
}

.langbar {
  position: absolute;
  left: 3px;
  bottom: 28px;
  width: 78px;
  height: 24px;
  display: flex;
  align-items: center;
  justify-content: space-between;
  padding: 0 4px 0 0;
  background: var(--gray);
  border: 1px solid #888;
}

.taskbar {
  position: absolute;
  left: 0;
  right: 0;
  bottom: 0;
  height: 28px;
  display: flex;
  align-items: center;
  padding: 2px 2px 0;
  background: var(--gray);
  border-top: 1px solid #fff;
}

.start, .task {
  display: flex;
  align-items: center;
  height: 22px;
  border: 1px solid;
  border-color: #fff #404040 #404040 #fff;
  box-shadow: inset -1px -1px #808080;
  white-space: nowrap;
  overflow: hidden;
}

.start {
  width: 50px;
  padding-left: 4px;
}

.split {
  width: 3px;
  height: 19px;
  margin-left: 6px;
  border: 1px solid;
  border-color: #fff #808080 #808080 #fff;
}

.quick {
  width: 76px;
  display: flex;
  gap: 7px;
  padding-left: 8px;
}

.tasks {
  flex: 1;
  display: flex;
  gap: 3px;
  margin-left: 4px;
}

.task {
  width: 63px;
  padding-left: 2px;
  gap: 1px;
}

.task.on {
  border-color: #404040 #fff #fff #404040;
  box-shadow: inset 1px 1px #808080;
  background: #ebe9e4;
}

.tray {
  width: 148px;
  height: 22px;
  display: flex;
  align-items: center;
  gap: 2px;
  padding: 0 15px 0 3px;
  border: 1px solid;
  border-color: #808080 #fff #fff #808080;
}

.tray time {
  margin-left: auto;
}
```
